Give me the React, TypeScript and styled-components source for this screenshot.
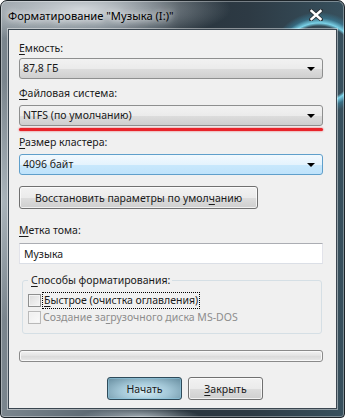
import React from "react";
import styled, { createGlobalStyle, css } from "styled-components";

const GlobalStyle = createGlobalStyle`
  html, body { margin: 0; padding: 0; width: 345px; height: 418px; overflow: hidden; background: #fff; }
  body { font-family: "Noto Sans", "Liberation Sans", sans-serif; font-size: 10.5px; color: #1a1a1a; }
  * { box-sizing: border-box; }
`;

const Window = styled.div`
  width: 345px;
  height: 418px;
  display: flex;
  flex-direction: column;
  padding: 0 7px 8px 7px;
  border: 1px solid #1c2328;
  border-radius: 7px 7px 4px 4px;
  background:
    radial-gradient(circle at 318px 62px, transparent 37px, rgba(130, 225, 248, 0.9) 40px, rgba(60, 170, 210, 0.35) 45px, transparent 51px),
    radial-gradient(ellipse 150px 34px at 80px 8px, rgba(215, 220, 224, 0.95), rgba(215, 220, 224, 0) 100%),
    radial-gradient(ellipse 40px 120px at 2px 200px, rgba(190, 200, 206, 0.7), transparent),
    radial-gradient(ellipse 60px 10px at 140px 416px, rgba(200, 210, 216, 0.7), transparent),
    linear-gradient(90deg, #7b868e 0%, #58656f 30%, #29353e 52%, #2d3a44 72%, #37505d 100%);
  box-shadow: inset 0 0 0 1px rgba(255, 255, 255, 0.35);
`;

const TitleBar = styled.div`
  height: 28px;
  display: flex;
  align-items: center;
  justify-content: space-between;
  padding: 0 14px 0 0;
`;

const Title = styled.span`
  font-size: 11.2px;
  color: #000;
  text-shadow: 0 0 6px rgba(255, 255, 255, 0.95), 0 0 10px rgba(255, 255, 255, 0.8);
`;

const CloseGlyph = styled.svg`
  width: 14px;
  height: 12px;
  display: block;
`;

const Content = styled.div`
  flex: 1;
  display: flex;
  flex-direction: column;
  background: #f0f0f0;
  border: 1px solid #3a4650;
  box-shadow: 0 0 0 1px rgba(255, 255, 255, 0.45);
  padding: 11px 13px 0 10px;
`;

const U = styled.span`
  text-decoration: underline;
  text-underline-offset: 2px;
`;

const Label = styled.div<{ $mt?: number }>`
  line-height: 15px;
  margin-top: ${(p) => p.$mt ?? 0}px;
`;

const Combo = styled.div<{ $mt?: number; $focused?: boolean }>`
  height: 21px;
  margin-top: ${(p) => p.$mt ?? 0}px;
  display: flex;
  align-items: center;
  justify-content: space-between;
  padding: 0 7px 0 3px;
  border: 1px solid #8e8f8f;
  border-radius: 3px;
  line-height: 15px;
  background: linear-gradient(#f2f2f2 0%, #ebebeb 50%, #dddddd 51%, #cfcfcf 100%);
  ${(p) =>
    p.$focused &&
    css`
      border-color: #5f9fcb;
      background: linear-gradient(#f2f9fe 0%, #e5f3fd 50%, #c9e8fc 51%, #bfe3fb 100%);
    `}
`;

const Arrow = styled.span`
  width: 0;
  height: 0;
  border-left: 4px solid transparent;
  border-right: 4px solid transparent;
  border-top: 4px solid #000;
`;

const RedMark = styled.div`
  height: 3px;
  margin-top: 2px;
  border-radius: 2px;
  background: #e8242a;
  box-shadow: 0 0 2px rgba(232, 36, 42, 0.8);
`;

const Button = styled.button<{ $mt?: number; $w: number; $default?: boolean }>`
  width: ${(p) => p.$w}px;
  height: 23px;
  margin-top: ${(p) => p.$mt ?? 0}px;
  padding: 0;
  font: inherit;
  color: #1a1a1a;
  border: 1px solid #707070;
  border-radius: 3px;
  background: linear-gradient(#f2f2f2 0%, #ebebeb 50%, #dddddd 51%, #cfcfcf 100%);
  box-shadow: inset 0 0 0 1px rgba(255, 255, 255, 0.7);
  ${(p) =>
    p.$default &&
    css`
      border-color: #2f4b5a;
      background: radial-gradient(ellipse 48px 18px at 50% 65%, #d2ecf6 0%, #a4c8d8 50%, #6d93a5 100%);
      box-shadow: inset 0 0 0 1px rgba(140, 200, 225, 0.55);
    `}
`;

const TextBox = styled.div`
  height: 21px;
  margin-top: 5px;
  padding: 0 4px;
  display: flex;
  align-items: center;
  background: #fff;
  border: 1px solid #dbdfe6;
  border-top-color: #abadb3;
  border-left-color: #e2e3ea;
  border-right-color: #e2e3ea;
`;

const Group = styled.fieldset`
  margin: 9px 1px 0 3px;
  padding: 5px 0 8px 5px;
  border: 1px solid #d5dfe5;
  border-radius: 3px;
  display: flex;
  flex-direction: column;
  gap: 2px;
  min-width: 0;
`;

const Legend = styled.legend`
  padding: 0 2px 0 3px;
  margin-left: 0;
  line-height: 15px;
`;

const CheckRow = styled.label<{ $disabled?: boolean }>`
  display: flex;
  align-items: center;
  gap: 2px;
  line-height: 15px;
  color: ${(p) => (p.$disabled ? "#8d8d8d" : "#1a1a1a")};
`;

const CheckBox = styled.span<{ $disabled?: boolean }>`
  width: 13px;
  height: 13px;
  flex: none;
  border: 1px solid ${(p) => (p.$disabled ? "#b9b9b9" : "#8e8f8f")};
  background: ${(p) =>
    p.$disabled
      ? "linear-gradient(135deg, #eeeeee, #fafafa)"
      : "linear-gradient(135deg, #dcdcdc 0%, #f6f6f6 100%)"};
  box-shadow: inset 0 0 0 1px #f4f4f4;
`;

const Focus = styled.span`
  outline: 1px dotted #000;
  outline-offset: 0;
  padding: 0 1px;
`;

const Progress = styled.div`
  height: 12px;
  margin-top: 16px;
  border: 1px solid #8a8a8a;
  border-radius: 3px;
  background: linear-gradient(#f3f3f3, #e1e1e1 50%, #dadada 51%, #e8e8e8);
  box-shadow: inset 0 0 0 1px #f8f8f8;
`;

const Buttons = styled.div`
  display: flex;
  justify-content: flex-end;
  gap: 6px;
  margin: 15px 60px 0 0;
`;

export default function App() {
  return (
    <>
      <GlobalStyle />
      <Window>
        <TitleBar>
          <Title>Форматирование "Музыка (I:)"</Title>
          <CloseGlyph viewBox="0 0 14 12">
            <path d="M2 1.5 L12 10.5 M12 1.5 L2 10.5" stroke="#2a3035" strokeWidth="4" strokeLinecap="round" />
            <path d="M2.5 2 L11.5 10 M11.5 2 L2.5 10" stroke="#ffffff" strokeWidth="2.4" strokeLinecap="square" />
          </CloseGlyph>
        </TitleBar>
        <Content>
          <Label>
            <U>Е</U>мкость:
          </Label>
          <Combo $mt={2}>
            <span>87,8 ГБ</span>
            <Arrow />
          </Combo>
          <Label $mt={7}>
            <U>Ф</U>айловая система:
          </Label>
          <Combo $mt={4}>
            <span>NTFS (по умолчанию)</span>
            <Arrow />
          </Combo>
          <RedMark />
          <Label $mt={4}>
            <U>Р</U>азмер кластера:
          </Label>
          <Combo $mt={4} $focused>
            <span>4096 байт</span>
            <Arrow />
          </Combo>
          <Button $mt={11} $w={239}>
            Восстановить параметры по умол<U>ч</U>анию
          </Button>
          <Label $mt={14}>
            <U>М</U>етка тома:
          </Label>
          <TextBox>Музыка</TextBox>
          <Group>
            <Legend>
              <U>С</U>пособы форматирования:
            </Legend>
            <CheckRow>
              <CheckBox />
              <Focus>
                <U>Б</U>ыстрое (очистка оглавления)
              </Focus>
            </CheckRow>
            <CheckRow $disabled>
              <CheckBox $disabled />
              <span>
                Создание за<U>г</U>рузочного диска MS-DOS
              </span>
            </CheckRow>
          </Group>
          <Progress />
          <Buttons>
            <Button $w={75} $default>
              Начать
            </Button>
            <Button $w={75}>
              <U>З</U>акрыть
            </Button>
          </Buttons>
        </Content>
      </Window>
    </>
  );
}
